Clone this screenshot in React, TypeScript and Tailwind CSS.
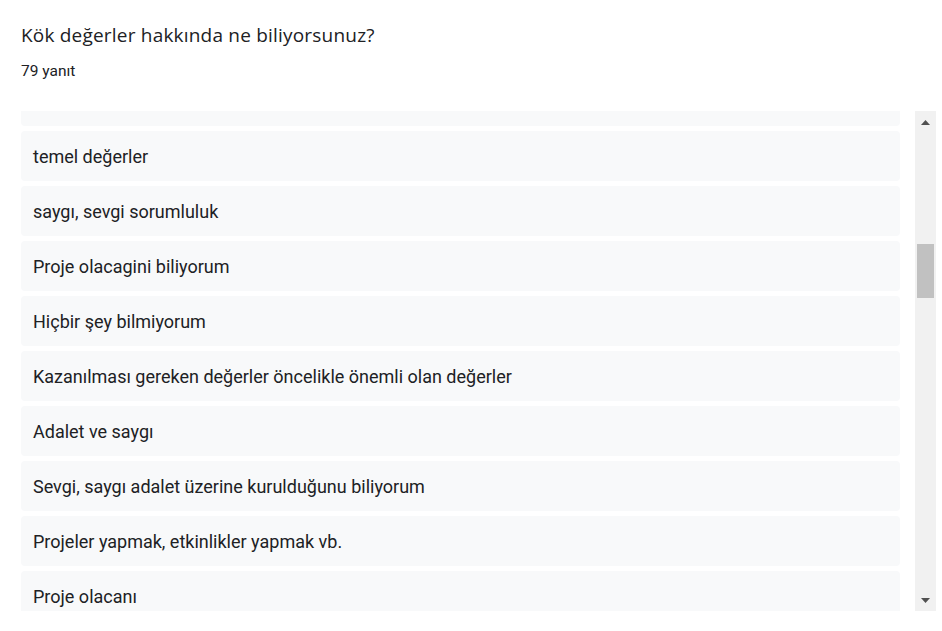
const answers = [
  '',
  'temel değerler',
  'saygı, sevgi sorumluluk',
  'Proje olacagini biliyorum',
  'Hiçbir şey bilmiyorum',
  'Kazanılması gereken değerler öncelikle önemli olan değerler',
  'Adalet ve saygı',
  'Sevgi, saygı adalet üzerine kurulduğunu biliyorum',
  'Projeler yapmak, etkinlikler yapmak vb.',
  'Proje olacanı',
];

const App = () => {
  return (
    <div className="w-[942px] h-[631px] bg-white overflow-hidden font-['Roboto',sans-serif] text-[#202124]">
      <div className="pl-[21px] pt-[21px]">
        <h1 className="text-[19px] leading-[28px] font-['Open_Sans',sans-serif] tracking-[0.2px]">
          Kök değerler hakkında ne biliyorsunuz?
        </h1>
        <p className="mt-[11px] text-[15.5px] leading-[22px]">79 yanıt</p>
      </div>

      <div className="mt-[29px] ml-[21px] flex h-[500px] w-[915px]">
        {/* list */}
        <div className="flex-1 overflow-hidden">
          <div className="-mt-[35px] flex flex-col gap-[5px] pr-[15px]">
            {answers.map((a, i) => (
              <div
                key={i}
                className="h-[50px] shrink-0 rounded-[4px] bg-[#f8f9fa] px-3 flex items-center text-[18px]"
              >
                {a}
              </div>
            ))}
          </div>
        </div>

        {/* scrollbar */}
        <div className="w-[21px] bg-[#f1f1f1] flex flex-col items-center">
          <div className="h-[22px] flex items-center justify-center">
            <svg width="9" height="5" viewBox="0 0 9 5">
              <path d="M0 5 L4.5 0 L9 5 Z" fill="#505050" />
            </svg>
          </div>
          <div className="h-[111px]" />
          <div className="w-[17px] h-[54px] bg-[#c1c1c1]" />
          <div className="flex-1" />
          <div className="h-[22px] flex items-center justify-center">
            <svg width="9" height="5" viewBox="0 0 9 5">
              <path d="M0 0 L9 0 L4.5 5 Z" fill="#505050" />
            </svg>
          </div>
        </div>
      </div>
    </div>
  );
};

export default App;
